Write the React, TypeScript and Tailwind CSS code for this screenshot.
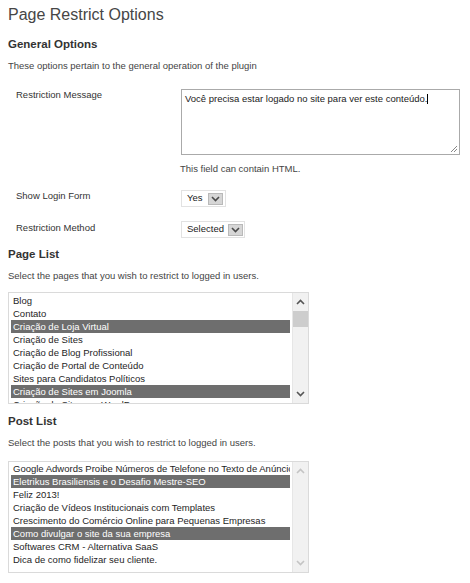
import React from 'react';

const pages = [
  'Blog',
  'Contato',
  'Criação de Loja Virtual',
  'Criação de Sites',
  'Criação de Blog Profissional',
  'Criação de Portal de Conteúdo',
  'Sites para Candidatos Políticos',
  'Criação de Sites em Joomla',
  'Criação de Sites em WordPress',
];

const posts = [
  'Google Adwords Proibe Números de Telefone no Texto de Anúncio',
  'Eletrikus Brasiliensis e o Desafio Mestre-SEO',
  'Feliz 2013!',
  'Criação de Vídeos Institucionais com Templates',
  'Crescimento do Comércio Online para Pequenas Empresas',
  'Como divulgar o site da sua empresa',
  'Softwares CRM - Alternativa SaaS',
  'Dica de como fidelizar seu cliente.',
];

function Chevron({ up, color }: { up?: boolean; color: string }) {
  return (
    <svg width="9" height="6" viewBox="0 0 9 6">
      <polyline
        points={up ? '1,5 4.5,1.5 8,5' : '1,1 4.5,4.5 8,1'}
        fill="none"
        stroke={color}
        strokeWidth="1.6"
      />
    </svg>
  );
}

function ListBox({
  items,
  selected,
  active,
  pt,
}: {
  items: string[];
  selected: number[];
  active: boolean;
  pt: string;
}) {
  return (
    <div className="flex w-[301px] h-[112px] border border-[#dadada] overflow-hidden">
      <div className={`flex-1 min-w-0 pl-[2px] pr-[2px] overflow-hidden ${pt}`}>
        {items.map((item, i) => (
          <div
            key={item}
            className={`h-[13px] leading-[13px] px-[2px] whitespace-nowrap overflow-hidden ${
              selected.includes(i) ? 'bg-[#6e6e6e] text-white' : 'text-[#1e1e1e]'
            }`}
          >
            {item}
          </div>
        ))}
      </div>
      <div className="w-[16px] bg-[#f1f1f1] border-l border-[#e6e6e6] flex flex-col items-center">
        <div className="h-[18px] flex items-center">
          <Chevron up color={active ? '#555' : '#c4c4c4'} />
        </div>
        {active ? <div className="w-[15px] h-[16px] bg-[#cdcdcd]" /> : null}
        <div className="flex-1" />
        <div className="h-[18px] flex items-center">
          <Chevron color={active ? '#555' : '#c4c4c4'} />
        </div>
      </div>
    </div>
  );
}

function Dropdown({ value, width }: { value: string; width: string }) {
  return (
    <div
      className={`flex items-center justify-between ${width} h-[17px] border border-[#e2e2e2] bg-white pl-[5px] pr-[2px] text-[#222]`}
    >
      <span className="whitespace-nowrap">{value}</span>
      <span className="shrink-0 ml-[4px] w-[15px] h-[12px] bg-[#d6d6d6] border border-[#b9b9b9] flex items-center justify-center">
        <Chevron color="#4a4a4a" />
      </span>
    </div>
  );
}

export default function App() {
  return (
    <div className="w-[470px] h-[583px] bg-white px-2 font-['Liberation_Sans',Arial,sans-serif] text-[9.5px] text-[#333] overflow-hidden">
      <h1 className="pt-[5px] text-[16px] leading-[20px] text-[#464646]">Page Restrict Options</h1>

      <h2 className="mt-[12px] text-[11.5px] leading-[14px] font-bold text-[#333]">General Options</h2>
      <p className="mt-[9px] leading-[12px] text-[#444]">
        These options pertain to the general operation of the plugin
      </p>

      <div className="mt-[17px] flex">
        <div className="w-[173px] pl-2 leading-[12px]">Restriction Message</div>
        <div>
          <div className="relative w-[279px] h-[66px] border border-[#aaa] px-[3px] py-[3px] text-[#222] leading-[12px]">
            Você precisa estar logado no site para ver este conteúdo.
            <span className="inline-block w-px h-[10px] bg-black align-middle" />
            <svg className="absolute right-[1px] bottom-[1px]" width="8" height="8" viewBox="0 0 8 8">
              <line x1="1" y1="7" x2="7" y2="1" stroke="#888" strokeWidth="1" />
              <line x1="4" y1="7" x2="7" y2="4" stroke="#888" strokeWidth="1" />
            </svg>
          </div>
          <p className="mt-[8px] leading-[12px] text-[#444] -ml-px">This field can contain HTML.</p>
        </div>
      </div>

      <div className="mt-[15px] flex">
        <div className="w-[173px] pl-2 leading-[12px]">Show Login Form</div>
        <Dropdown value="Yes" width="w-[45px]" />
      </div>

      <div className="mt-[14px] flex">
        <div className="w-[173px] pl-2 leading-[12px] pt-[1px]">Restriction Method</div>
        <Dropdown value="Selected" width="w-[64px]" />
      </div>

      <h2 className="mt-[9px] text-[11.5px] leading-[14px] font-bold text-[#333]">Page List</h2>
      <p className="mt-[9px] leading-[12px] text-[#444]">
        Select the pages that you wish to restrict to logged in users.
      </p>
      <div className="mt-[10px]">
        <ListBox items={pages} selected={[2, 7]} active pt="pt-[1px]" />
      </div>

      <h2 className="mt-[10px] text-[11.5px] leading-[14px] font-bold text-[#333]">Post List</h2>
      <p className="mt-[9px] leading-[12px] text-[#444]">
        Select the posts that you wish to restrict to logged in users.
      </p>
      <div className="mt-[12px]">
        <ListBox items={posts} selected={[1, 5]} active={false} pt="pt-[0px]" />
      </div>
    </div>
  );
}
